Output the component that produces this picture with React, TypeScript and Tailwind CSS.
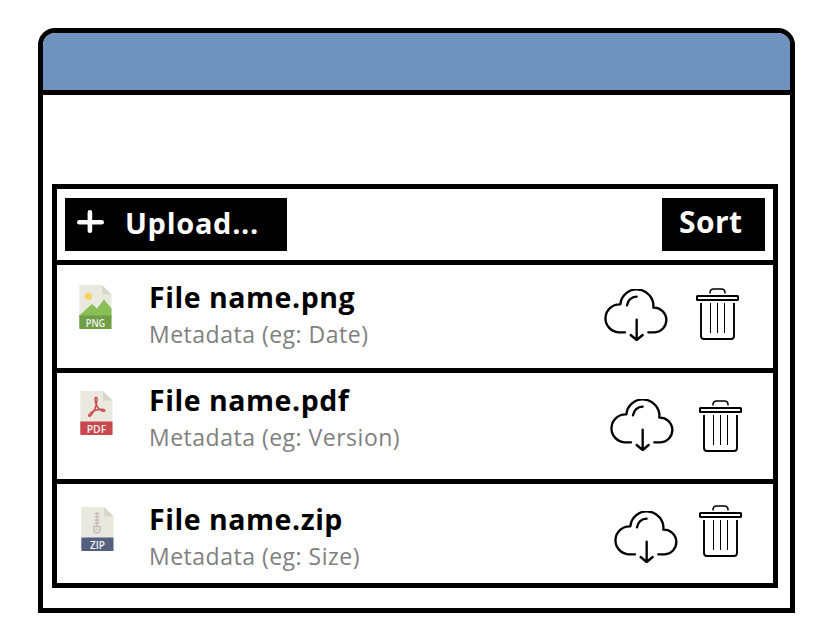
import React from "react";

type Kind = "png" | "pdf" | "zip";

function FileIcon({ kind, className }: { kind: Kind; className: string }) {
  const band = { png: "#6f9e45", pdf: "#c9474d", zip: "#556080" }[kind];
  return (
    <svg className={`block h-[44px] w-[33px] shrink-0 ${className}`} viewBox="0 0 33 44">
      <path d="M1 0H23L32.500 9.500V44H1Q.3 44 .3 43V1Q.3 0 1 0Z" fill="#e9e9e0" />
      <path d="M23 0L32.500 9.500H23Z" fill="#d9d7ca" />
      {kind === "png" && (
        <g>
          <circle cx="9.300" cy="11.300" r="3.600" fill="#f3d55b" />
          <path d="M.3 30.500L13 19L18 23.500L25 14.500L32.500 23.500V32H.3Z" fill="#88c057" />
        </g>
      )}
      {kind === "pdf" && (
        <path
          d="M16 6.500C14.300 6.500 15 10.500 16.500 14.200C18 17.200 20.300 19.700 23 20.300C25.500 20.500 25.500 18.300 22.500 18.300C18.500 18.300 13 20 10.500 22C7.500 24.500 9 26.800 11 24.300C13.800 20.500 16.500 14.500 17 9.800C17.300 7.500 17 6.500 16 6.500Z"
          fill="none"
          stroke="#cc4b4c"
          strokeWidth="1.500"
        />
      )}
      {kind === "zip" && (
        <g fill="none" stroke="#c8bdb8" strokeWidth="1.400">
          <path d="M16 5V19M13.500 7H18.500M13.500 10H18.500M13.500 13H18.500M13.500 16H18.500" />
          <path d="M12.800 19.500H19.200V22.500Q19.200 26 16 26Q12.800 26 12.800 22.500Z" />
          <path d="M14.500 22.500H17.500" />
        </g>
      )}
      <path d="M.3 30.500H32.500V44H1Q.3 44 .3 43Z" fill={band} />
      <text
        x="16.500"
        y="41.500"
        textAnchor="middle"
        textLength={kind === "zip" ? 15 : 19.5}
        lengthAdjust="spacingAndGlyphs"
        fill="#f4f4f0"
        className="font-['Open_Sans',sans-serif] text-[11.500px] font-semibold"
      >
        {kind.toUpperCase()}
      </text>
    </svg>
  );
}

function CloudDownload({ className }: { className: string }) {
  return (
    <svg
      className={`block h-[52px] w-[64px] shrink-0 ${className}`}
      viewBox="0 0 192 156"
      fill="none"
      stroke="#000"
      strokeWidth="7"
      strokeLinecap="round"
      strokeLinejoin="round"
    >
      <path d="M63 130H44A42 42 0 0 1 49 46A49 49 0 0 1 148 56A37 37 0 0 1 152 130H133" />
      <path d="M69 49A29 29 0 0 1 98 23" />
      <path d="M98 92V152M80 138L98 153L116 138" />
    </svg>
  );
}

function Trash({ className }: { className: string }) {
  return (
    <svg className={`block h-[52px] w-[43px] shrink-0 ${className}`} viewBox="0 0 43 52" fill="none" stroke="#000">
      <path d="M14 5.500V4Q14.500 1 17.500 1H25.500Q28.500 1 29 4V5.500" strokeWidth="1.500" />
      <rect x="1" y="8" width="41" height="4" rx=".5" strokeWidth="2" />
      <path d="M5 15V48Q5 51 8 51H35Q38 51 38 48V15" strokeWidth="1.900" />
      <path d="M14.500 15V45M21.500 15V45M28.500 15V45" strokeWidth="1" />
    </svg>
  );
}

const rows = [
  {
    kind: "png" as Kind, name: "File name.png", meta: "Metadata (eg: Date)",
    row: "h-[103px]", icon: "ml-[22px] mt-[20px]", text: "ml-[37px] mt-[13px]",
    cloud: "mt-[24px] mr-[28px]", trash: "mt-[23px] mr-[34px]",
  },
  {
    kind: "pdf" as Kind, name: "File name.pdf", meta: "Metadata (eg: Version)",
    row: "h-[111px] border-t-[5px]", icon: "ml-[23px] mt-[18px]", text: "ml-[36px] mt-[8px]",
    cloud: "mt-[26px] mr-[25px]", trash: "mt-[27px] mr-[31px]",
  },
  {
    kind: "zip" as Kind, name: "File name.zip", meta: "Metadata (eg: Size)",
    row: "h-[104px] border-t-[5px]", icon: "ml-[24px] mt-[23px]", text: "ml-[35px] mt-[16px]",
    cloud: "mt-[27px] mr-[21px]", trash: "mt-[21px] mr-[31px]",
  },
];

export default function App() {
  return (
    <div className="h-[641px] w-[828px] overflow-hidden bg-white pl-[38px] pt-[28px] font-['Open_Sans',sans-serif] text-black">
      <div className="h-[585px] w-[757px] overflow-hidden rounded-t-[17px] border-[5px] border-black">
        <header className="h-[62px] border-b-[5px] border-black bg-[#7092be]" />
        <main className="ml-[9px] mt-[89px] h-[404px] w-[726px] border-[5px] border-black">
          <div className="flex h-[76px] items-start justify-between border-b-[5px] border-black px-[8px] pt-[9px]">
            <button className="flex h-[53px] w-[222px] items-start bg-black pl-[12px] text-left text-white">
              <svg className="mt-[12px] block h-[23px] w-[27px]" viewBox="0 0 27 23" stroke="#fff" strokeWidth="4.600" strokeLinecap="round">
                <path d="M2.300 12.300H24.700M12.900 2.300V20.700" />
              </svg>
              <span className="ml-[21px] mt-[5px] text-[29px] font-bold leading-[40px] tracking-[0.7px]">Upload...</span>
            </button>
            <button className="h-[53px] w-[103px] bg-black pl-[17px] text-left text-white">
              <span className="block h-[45px] text-[30px] font-bold leading-[40px] tracking-[0.4px]">Sort</span>
            </button>
          </div>
          {rows.map((r) => (
            <div key={r.kind} className={`flex items-start border-black ${r.row}`}>
              <FileIcon kind={r.kind} className={r.icon} />
              <div className={`grow whitespace-nowrap ${r.text}`}>
                <div className="text-[28.500px] font-bold leading-[38px] tracking-[0.55px]">{r.name}</div>
                <div className="text-[23px] leading-[36px] tracking-[0.5px] text-[#7f7f7f]">{r.meta}</div>
              </div>
              <CloudDownload className={r.cloud} />
              <Trash className={r.trash} />
            </div>
          ))}
        </main>
      </div>
    </div>
  );
}
